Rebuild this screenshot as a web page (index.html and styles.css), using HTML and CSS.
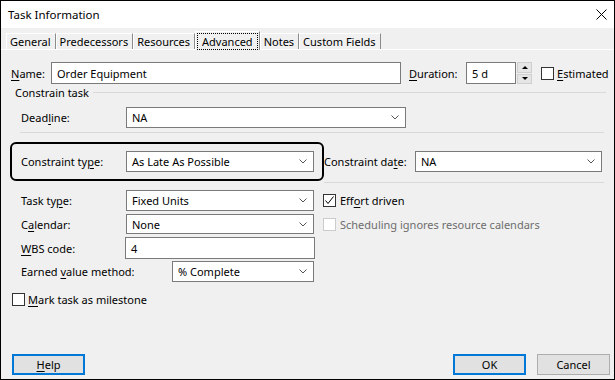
FILE: index.html
```html
<!DOCTYPE html>
<html lang="en">
<head>
  <meta charset="UTF-8">
  <title>Task Information</title>
  <link rel="stylesheet" href="styles.css">
</head>
<body>
  <div class="window">
    <div class="titlebar">
      <span class="title">Task Information</span>
      <svg class="close" width="11" height="11" viewBox="0 0 11 11"><path d="M0.5 0.5L10.5 10.5M10.5 0.5L0.5 10.5" stroke="#000" stroke-width="1" fill="none"/></svg>
    </div>

    <div class="tabs">
      <div class="tab">General</div>
      <div class="tab">Predecessors</div>
      <div class="tab">Resources</div>
      <div class="tab active"><span class="focus">Advanced</span></div>
      <div class="tab">Notes</div>
      <div class="tab">Custom Fields</div>
    </div>

    <div class="panel">
      <div class="row name-row">
        <span class="label name-label"><u>N</u>ame:</span>
        <div class="input name-input">Order Equipment</div>
        <span class="label duration-label"><u>D</u>uration:</span>
        <div class="input duration-input">5 d</div>
        <div class="spinner">
          <span class="spin"><i class="tri up"></i></span>
          <span class="spin"><i class="tri down"></i></span>
        </div>
        <span class="check estimated-check"></span>
        <span class="label check-label"><u>E</u>stimated</span>
      </div>

      <div class="group-head">
        <span class="label">Constrain task</span>
        <span class="group-line"></span>
      </div>

      <div class="row field-row deadline-row">
        <span class="label col-label">Dead<u>l</u>ine:</span>
        <div class="select deadline-select">
          <span>NA</span>
          <svg class="chevron" width="8" height="5" viewBox="0 0 8 5"><polyline points="0.5,0.5 4,4 7.5,0.5" fill="none" stroke="#555" stroke-width="1"/></svg>
        </div>
      </div>

      <div class="sep"></div>

      <div class="row field-row constraint-row">
        <div class="highlight"></div>
        <span class="label col-label">Constraint ty<u>p</u>e:</span>
        <div class="select mid-select">
          <span>As Late As Possible</span>
          <svg class="chevron" width="8" height="5" viewBox="0 0 8 5"><polyline points="0.5,0.5 4,4 7.5,0.5" fill="none" stroke="#555" stroke-width="1"/></svg>
        </div>
        <span class="label date-label">Constraint da<u>t</u>e:</span>
        <div class="select date-select">
          <span>NA</span>
          <svg class="chevron" width="8" height="5" viewBox="0 0 8 5"><polyline points="0.5,0.5 4,4 7.5,0.5" fill="none" stroke="#555" stroke-width="1"/></svg>
        </div>
      </div>

      <div class="sep sep-right"></div>

      <div class="row field-row tasktype-row">
        <span class="label col-label">Task ty<u>p</u>e:</span>
        <div class="select mid-select">
          <span>Fixed Units</span>
          <svg class="chevron" width="8" height="5" viewBox="0 0 8 5"><polyline points="0.5,0.5 4,4 7.5,0.5" fill="none" stroke="#555" stroke-width="1"/></svg>
        </div>
        <span class="check side-check checked">
          <svg width="11" height="11" viewBox="0 0 11 11"><polyline points="1.5,5.5 4,8.5 9.5,1.5" fill="none" stroke="#000" stroke-width="1"/></svg>
        </span>
        <span class="label check-label side-label">Eff<u>o</u>rt driven</span>
      </div>

      <div class="row field-row calendar-row">
        <span class="label col-label">C<u>a</u>lendar:</span>
        <div class="select mid-select">
          <span>None</span>
          <svg class="chevron" width="8" height="5" viewBox="0 0 8 5"><polyline points="0.5,0.5 4,4 7.5,0.5" fill="none" stroke="#555" stroke-width="1"/></svg>
        </div>
        <span class="check side-check disabled"></span>
        <span class="label check-label side-label disabled-text">Schedulin<u>g</u> ignores resource calendars</span>
      </div>

      <div class="row field-row wbs-row">
        <span class="label wbs-label"><u>W</u>BS code:</span>
        <div class="input wbs-input">4</div>
      </div>

      <div class="row field-row earned-row">
        <span class="label earned-label">Earned <u>v</u>alue method:</span>
        <div class="select earned-select">
          <span>% Complete</span>
          <svg class="chevron" width="8" height="5" viewBox="0 0 8 5"><polyline points="0.5,0.5 4,4 7.5,0.5" fill="none" stroke="#555" stroke-width="1"/></svg>
        </div>
      </div>

      <div class="row milestone-row">
        <span class="check"></span>
        <span class="label check-label"><u>M</u>ark task as milestone</span>
      </div>

      <div class="spacer"></div>

      <div class="buttons">
        <div class="btn default"><u>H</u>elp</div>
        <div class="btn default ok-btn">OK</div>
        <div class="btn cancel-btn">Cancel</div>
      </div>
    </div>
  </div>
</body>
</html>
```

FILE: styles.css
```css
body {
  margin: 0;
  font-family: "Noto Sans", "Open Sans", sans-serif;
  font-size: 11px;
  color: #000;
  background: #fff;
}

u {
  text-decoration-thickness: 1px;
  text-underline-offset: 2px;
}

.window {
  width: 615px;
  height: 380px;
  box-sizing: border-box;
  border: 1px solid #000;
  background: #f0f0f0;
  display: flex;
  flex-direction: column;
}

.titlebar {
  height: 27px;
  background: #fff;
  display: flex;
  align-items: center;
  justify-content: space-between;
  padding: 0 7px;
  font-size: 11.5px;
}

.close {
  display: block;
}

/* tabs */
.tabs {
  height: 21px;
  display: flex;
  align-items: flex-end;
  padding-left: 5px;
}

.tab {
  height: 15px;
  line-height: 15px;
  padding: 0 4px 0 3px;
  border-top: 1px solid #fff;
  border-left: 1px solid #fff;
  border-right: 1px solid #8c8c8c;
  white-space: nowrap;
}

.tab.active {
  height: 18px;
  line-height: 16px;
  padding: 0 1px;
  margin-bottom: -1px;
  background: #f0f0f0;
  position: relative;
}

.focus {
  display: block;
  margin-top: 1px;
  padding: 0 4px;
  border: 1px dotted #000;
  line-height: 15px;
}

.panel {
  flex: 1;
  border-top: 1px solid #fff;
  display: flex;
  flex-direction: column;
}

/* rows */
.row {
  display: flex;
  align-items: center;
}

.label {
  white-space: nowrap;
}

.input, .select {
  box-sizing: border-box;
  background: #fff;
  border: 1px solid #7a7a7a;
  display: flex;
  align-items: center;
  padding: 0 6px 0 5px;
  white-space: nowrap;
}

.select {
  height: 100%;
  justify-content: space-between;
}

.input {
  height: 100%;
}

.chevron {
  display: block;
  flex: none;
}

.name-row {
  margin-top: 12px;
  height: 22px;
  padding-left: 10px;
}

.name-label {
  width: 40px;
}

.name-input {
  width: 350px;
}

.duration-label {
  width: 57px;
  margin-left: 8px;
}

.duration-input {
  width: 50px;
}

.spinner {
  width: 15px;
  height: 100%;
  margin-left: 1px;
  display: flex;
  flex-direction: column;
  gap: 1px;
}

.spin {
  flex: 1;
  box-sizing: border-box;
  background: #e5e5e5;
  border: 1px solid #cfcfcf;
  display: flex;
  align-items: center;
  justify-content: center;
}

.tri {
  width: 0;
  height: 0;
  border-left: 3px solid transparent;
  border-right: 3px solid transparent;
}

.tri.up {
  border-bottom: 3px solid #000;
}

.tri.down {
  border-top: 3px solid #000;
}

.check {
  width: 13px;
  height: 13px;
  box-sizing: border-box;
  border: 1px solid #333;
  background: #fff;
  flex: none;
  display: flex;
  align-items: center;
  justify-content: center;
}

.check svg {
  display: block;
}

.check.disabled {
  border-color: #cccccc;
}

.estimated-check {
  margin-left: 9px;
}

.check-label {
  margin-left: 3px;
}

.disabled-text {
  color: #6d6d6d;
}

.group-head {
  height: 16px;
  display: flex;
  align-items: center;
  padding-left: 14px;
}

.group-line {
  flex: 1;
  margin: 1px 8px 0 4px;
  border-top: 1px solid #d9d9d9;
}

.field-row {
  padding-left: 20px;
}

.col-label {
  width: 105px;
}

.deadline-row {
  margin-top: 7px;
  height: 21px;
}

.deadline-select {
  width: 280px;
}

.sep {
  margin: 4px 10px 0 19px;
  border-top: 1px solid #d9d9d9;
}

.sep-right {
  margin-top: 10px;
  margin-left: 323px;
}

.constraint-row {
  margin-top: 18px;
  height: 21px;
  position: relative;
}

.highlight {
  position: absolute;
  left: 9px;
  top: -9px;
  width: 314px;
  height: 39px;
  box-sizing: border-box;
  border: 2px solid #000;
  border-radius: 6px;
}

.mid-select {
  width: 188px;
}

.date-label {
  width: 91px;
  margin-left: 10px;
}

.date-select {
  width: 187px;
}

.tasktype-row {
  margin-top: 7px;
  height: 21px;
}

.calendar-row {
  margin-top: 3px;
  height: 20px;
}

.side-check {
  margin-left: 9px;
}

.side-label {
  margin-left: 4px;
}

.wbs-row {
  margin-top: 3px;
  height: 22px;
}

.wbs-label {
  width: 104px;
}

.wbs-input {
  width: 190px;
}

.earned-row {
  margin-top: 2px;
  height: 21px;
}

.earned-label {
  width: 151px;
}

.earned-select {
  width: 142px;
}

.milestone-row {
  margin-top: 9px;
  height: 16px;
  padding-left: 11px;
}

.spacer {
  flex: 1;
}

.buttons {
  height: 21px;
  margin-bottom: 4px;
  padding: 0 4px 0 11px;
  display: flex;
}

.btn {
  width: 73px;
  height: 21px;
  box-sizing: border-box;
  border: 1px solid #adadad;
  background: #e1e1e1;
  display: flex;
  align-items: center;
  justify-content: center;
}

.btn.default {
  border: 2px solid #0078d7;
}

.ok-btn {
  margin-left: auto;
}

.cancel-btn {
  margin-left: 11px;
}
```
